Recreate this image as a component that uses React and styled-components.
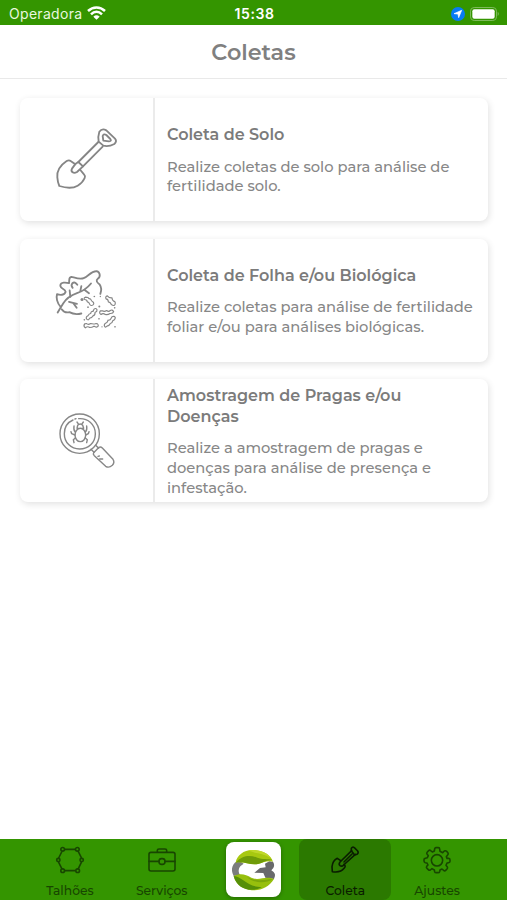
import React from 'react';
import styled, { createGlobalStyle } from 'styled-components';

const GlobalStyle = createGlobalStyle`
  * {
    box-sizing: border-box;
  }
  body {
    margin: 0;
    background-color: #fff;
    font-family: Montserrat, Inter, sans-serif;
  }
  h1, h2, p {
    margin: 0;
  }
  svg {
    display: block;
  }
`;

const Screen = styled.div`
  height: 900px;
  display: flex;
  flex-direction: column;
  overflow: hidden;
  background-color: #fff;
`;

const StatusBar = styled.div`
  height: 25px;
  flex: none;
  display: grid;
  grid-template-columns: 1fr auto 1fr;
  align-items: center;
  padding: 2px 7px 0 9px;
  background-color: #349500;
  color: #e9f7df;
  font-family: Inter, sans-serif;
  font-size: 14px;
  line-height: 20px;
`;

const Carrier = styled.div`
  display: flex;
  align-items: center;
  gap: 5px;
  letter-spacing: 0.3px;
`;

const Clock = styled.div`
  font-weight: 600;
  letter-spacing: 0.6px;
  color: #fff;
`;

const Indicators = styled.div`
  display: flex;
  justify-content: flex-end;
  align-items: center;
  gap: 5px;
`;

const Header = styled.header`
  height: 54px;
  flex: none;
  display: flex;
  align-items: center;
  justify-content: center;
  border-bottom: 1px solid #e9e9e9;

  h1 {
    color: #808080;
    font-size: 22.3px;
    font-weight: 600;
    line-height: 28px;
  }
`;

const CardList = styled.main`
  flex: 1;
  display: flex;
  flex-direction: column;
  gap: 17.7px;
  padding: 19px 19px 0 20px;
`;

const Card = styled.section`
  height: 123px;
  display: flex;
  border-radius: 8px;
  background-color: #fff;
  box-shadow: 1px 2px 7px rgba(0, 0, 0, 0.12);
`;

const CardIcon = styled.div`
  width: 135px;
  flex: none;
  display: flex;
  align-items: center;
  justify-content: center;
  padding-top: 1px;
  border-right: 2px solid #ebebeb;
`;

const CardBody = styled.div`
  flex: 1;
  display: flex;
  flex-direction: column;
  justify-content: center;
  gap: 12px;
  padding: 3px 0 0 12px;
  white-space: nowrap;
`;

const CardTitle = styled.h2`
  color: #7b7b7b;
  font-size: 16px;
  font-weight: 600;
  line-height: 20.5px;
`;

const CardText = styled.p`
  color: #878787;
  font-size: 14.7px;
  font-weight: 500;
  line-height: 19.6px;

  span {
    display: block;
  }
`;

const TabBar = styled.nav`
  height: 61.5px;
  flex: none;
  display: grid;
  grid-template-columns: repeat(5, 1fr);
  padding: 0 24px;
  background-color: #349500;
`;

const Tab = styled.div`
  display: flex;
  flex-direction: column;
  align-items: center;
  gap: 8px;
  padding-top: 6px;
  border-radius: 8px;
  background-color: ${({ $active }) => ($active ? '#2b7900' : 'transparent')};
  color: ${({ $active }) => ($active ? '#0a1d00' : '#184600')};
  font-size: 12.3px;
  font-weight: 500;
  line-height: 16px;
`;

const LogoTab = styled.div`
  display: flex;
  justify-content: center;
  padding-top: 3px;
`;

const LogoBox = styled.div`
  width: 55px;
  height: 55px;
  border-radius: 8px;
  background-color: #fff;
  box-shadow: 0 1px 4px rgba(0, 0, 0, 0.3);
`;

const LineIcon = styled.svg`
  fill: none;
  stroke: ${({ $color }) => $color || 'currentColor'};
  stroke-width: ${({ $stroke }) => $stroke || 5.5};
  stroke-linecap: ${({ $cap }) => $cap || 'round'};
  stroke-linejoin: round;
`;

const WifiIcon = () => (
  <LineIcon width="19" height="15" viewBox="0 0 57 45" $color="#fff" $stroke={7.5} $cap="butt">
    <path d="M3 15 C18 1 39 1 54 15" />
    <path d="M12 25 C22 15 35 15 45 25" />
    <path d="M19 32 Q28.500 24 38 32 L28.500 41 Z" fill="#fff" stroke="none" />
  </LineIcon>
);

const LocationIcon = () => (
  <svg width="14" height="14" viewBox="0 0 42 42">
    <circle cx="21" cy="21" r="21" fill="#087cf5" />
    <path d="M32 10 L23 32 L21 21 L9 20 Z" fill="#fff" stroke="#fff" strokeWidth="2" strokeLinejoin="round" />
  </svg>
);

const BatteryIcon = () => (
  <svg width="30" height="14" viewBox="0 0 90 42">
    <rect x="1.500" y="1.500" width="78" height="39" rx="11" fill="none" stroke="#7dba5a" strokeWidth="3" />
    <rect x="7" y="7" width="67" height="28" rx="6" fill="#fff" />
    <path d="M83 14 Q90 20 83 27 Z" fill="#7dba5a" />
  </svg>
);

const ShovelIcon = () => (
  <LineIcon width="90" height="85" viewBox="6 6 270 255" $color="#858585">
    <path d="M106 145 L92 135 Q87 131 80 135 C62 147 50 164 52 184 Q53 199 58 210 C77 216 98 218 113 209 Q128 200 134 186 Q137 180 132 175 L121 162" />
    <path d="M107 143 L96 158 Q92 165 98 169 Q103 173 111 168 L129 151 L115 138 Z" />
    <path d="M115 138 L175 78 M129 151 L188 92" />
    <path d="M176 77 Q173 62 178 47 Q186 36 199 43 L225 68 Q232 76 223 84 Q206 93 190 89 Z" />
    <path d="M190 74 L188 60 Q191 52 199 57 L211 69 Q216 75 207 76 Z" />
  </LineIcon>
);

const microbes = [
  'M136 125 Q130 127 134 132 Q141 132 142 139 Q147 139 149 146 Q153 153 159 148 Q164 143 158 139 Q154 137 152 131 Q145 130 144 126 Z',
  'M202 121 Q195 123 198 130 Q205 131 205 139 Q212 140 214 147 Q222 153 225 147 Q228 139 221 137 Q216 134 216 127 Q208 128 202 121 Z',
  'M162 161 Q168 156 171 163 Q172 168 165 171 Q166 179 159 181 Q156 188 149 188 Q146 196 140 191 Q136 185 144 181 Q147 174 152 174 Q154 166 159 168 Z',
  'M181 166 Q176 173 183 177 Q189 172 196 177 Q203 179 210 174 Q219 175 221 168 Q216 161 211 165 Q206 170 200 165 Q193 170 187 166 Z',
  'M134 205 Q129 212 136 217 Q143 211 149 216 Q156 216 162 212 Q170 218 175 211 Q174 202 165 205 Q158 206 152 204 Q144 209 140 204 Z',
  'M216 184 Q223 180 226 187 Q225 194 218 196 Q217 203 211 204 Q208 211 201 212 Q196 218 193 211 Q192 205 199 202 Q203 200 204 194 Q211 195 213 189 Z',
];

const LeafIcon = () => (
  <LineIcon width="90" height="85" viewBox="6 7.500 270 255" $color="#858585">
    <path d="M53 171 Q61 157 70 143 Q83 123 111 113 Q137 104 153 84" />
    <path d="M62 154 C51 143 48 126 51 116 C60 119 74 120 77 109 C75 98 60 101 61 89 C63 80 76 80 87 83 C89 72 85 66 94 64 C106 67 120 73 131 68 C146 62 151 48 170 47 C181 50 182 64 174 69 C166 75 171 81 179 87 Q187 99 181 115" />
    <path d="M65 161 Q73 173 88 170 Q104 179 124 174" />
    <path d="M91 124 L89 105 M121 107 L124 92 M133 103 L147 113 M87 139 L111 145 M100 143 L110 157" />
    <path d="M112 88 Q105 77 97 83 Q92 90 98 97" />
    <LineIcon as="g" $color="#858585" $stroke={3.4}>
      {microbes.map((d) => (
        <path d={d} key={d} />
      ))}
    </LineIcon>
    <g fill="#858585" stroke="none">
      <circle cx="126" cy="132" r="4.500" />
      <circle cx="163" cy="123" r="2.500" />
      <circle cx="181" cy="123" r="2" />
      <circle cx="144" cy="155" r="2.500" />
      <circle cx="178" cy="153" r="3" />
      <circle cx="224" cy="157" r="2.500" />
      <circle cx="133" cy="193" r="2.500" />
      <circle cx="177" cy="190" r="2.500" />
      <circle cx="225" cy="214" r="2.500" />
      <circle cx="186" cy="214" r="2" />
    </g>
  </LineIcon>
);

const MagnifierIcon = () => (
  <LineIcon width="90" height="85" viewBox="6 9 270 255" $color="#878787" $stroke={4.2}>
    <circle cx="119" cy="113" r="59" />
    <path d="M116 68 C144 66 166 85 166 113 C166 140 145 159 119 159 C92 159 73 139 73 113 C73 95 83 79 99 72 M105 69 L108 68" />
    <ellipse cx="121" cy="117" rx="16" ry="20" />
    <path d="M111 97 L113 88 Q121 80 128 88 L131 97 Z M116 85 L111 78 M125 85 L130 78" />
    <path d="M106 108 Q100 103 102 90 M105 117 L95 113 L93 107 M106 126 L100 131 L102 140 M136 108 Q142 103 140 90 M137 117 L145 113 L147 107 M136 126 L142 131 L140 140" />
    <path d="M153 160 L162 169 M167 148 L176 157" />
    <path d="M161 170 L177 154 Q182 151 187 156 L219 190 Q225 199 217 208 Q207 217 197 211 L163 179 Q158 174 161 170 Z" />
    <path d="M174 181 L178 180 M179 189 L188 189" />
  </LineIcon>
);

const FieldIcon = () => (
  <LineIcon width="30" height="30" viewBox="0 0 90 90" $stroke={4.8}>
    <path d="M30 13 H60 M70 20 L79 38 M79 52 L70 71 M60 77 H30 M20 70 L11 52 M11 39 L20 21" />
    <circle cx="23" cy="13" r="5.500" />
    <circle cx="67" cy="13" r="5.500" />
    <circle cx="80" cy="45" r="5" />
    <circle cx="68" cy="77" r="5.500" />
    <circle cx="23" cy="77" r="5.500" />
    <circle cx="10" cy="45" r="5" />
  </LineIcon>
);

const BriefcaseIcon = () => (
  <LineIcon width="30" height="30" viewBox="0 0 90 90" $stroke={4.8}>
    <rect x="6" y="22" width="78" height="56" rx="6" />
    <path d="M31 21 V16 Q31 12 36 12 H54 Q59 12 59 16 V21 M6 49 H36 M54 49 H84" />
    <rect x="36" y="41" width="18" height="17" rx="8" />
  </LineIcon>
);

const ShovelTabIcon = () => (
  <LineIcon width="30" height="30" viewBox="0 0 90 90" $stroke={4.8}>
    <path d="M32 47 L22 40 Q8 47 6 65 L7 80 Q32 84 42 70 Q49 64 42 58" />
    <path d="M65 17 L30 51 Q25 58 30 62 Q36 66 41 60 L76 28" />
    <path d="M64 17 L64 10 Q67 4 73 8 L83 18 Q87 24 81 28 L74 30 Z M42 51 L66 27" />
  </LineIcon>
);

// Eight rounded teeth around the hub
const GearIcon = () => (
  <LineIcon width="30" height="30" viewBox="0 0 90 90" $stroke={4.8}>
    <path d="M38 12 Q38 8 42 8 H49 Q53 8 53 12 L54 19 L62 23 L67 18 Q71 16 74 19 L78 24 Q80 27 77 30 L73 35 L75 40 L80 40 Q84 41 84 45 V49 Q84 53 80 53 L75 54 L72 61 L76 66 Q78 69 75 72 L71 76 Q68 79 65 76 L60 72 L54 75 L53 80 Q52 83 48 83 H43 Q39 83 38 80 L37 75 L30 71 L25 75 Q22 77 19 74 L15 70 Q12 67 14 64 L18 60 L15 54 L10 53 Q6 52 6 48 V44 Q6 40 10 40 L16 38 L19 32 L15 27 Q13 24 16 21 L20 17 Q23 14 26 17 L31 21 L37 18 Z" />
    <circle cx="45" cy="46" r="17" />
  </LineIcon>
);

const Logo = () => (
  <svg width="55" height="55" viewBox="48 33 165 165">
    <path d="M86 88 C68 96 60 114 71 135 L91 133 C84 125 85 113 91 106 L101 98 Z" fill="#7b7c7d" />
    <path d="M133 125 L150 111 L167 109 L165 98 L178 91 L189 92 Q198 106 184 118 Q201 127 192 144 L166 140 L160 126 Z" fill="#68696b" />
    <path d="M77 95 C80 70 109 52 137 58 C163 60 182 73 189 92 C172 88 157 96 144 99 C119 103 101 90 77 95 Z" fill="#a7c810" />
    <path d="M77 95 C98 71 122 72 142 80 C156 86 174 82 187 87 C171 85 159 95 144 99 C119 103 101 90 77 95 Z" fill="#6f9b08" />
    <path d="M115 58 C138 70 157 64 184 82 C174 64 141 53 115 58 Z" fill="#bfd72a" />
    <path d="M71 135 C91 126 107 130 124 140 C147 151 166 133 192 144 C176 170 147 183 117 176 C94 172 76 157 71 135 Z" fill="#97bf0d" />
    <path d="M71 135 C97 137 111 168 155 168 C132 184 82 180 71 135 Z" fill="#568f08" />
    <path d="M110 137 C139 154 162 145 189 145 C166 158 133 158 110 137 Z" fill="#7ca70a" />
  </svg>
);

const cards = [
  {
    title: ['Coleta de Solo'],
    text: ['Realize coletas de solo para análise de', 'fertilidade solo.'],
    Icon: ShovelIcon,
  },
  {
    title: ['Coleta de Folha e/ou Biológica'],
    text: ['Realize coletas para análise de fertilidade', 'foliar e/ou para análises biológicas.'],
    Icon: LeafIcon,
  },
  {
    title: ['Amostragem de Pragas e/ou', 'Doenças'],
    text: ['Realize a amostragem de pragas e', 'doenças para análise de presença e', 'infestação.'],
    Icon: MagnifierIcon,
  },
];

export default function App() {
  return (
    <Screen>
      <GlobalStyle />
      <StatusBar>
        <Carrier>
          Operadora
          <WifiIcon />
        </Carrier>
        <Clock>15:38</Clock>
        <Indicators>
          <LocationIcon />
          <BatteryIcon />
        </Indicators>
      </StatusBar>
      <Header>
        <h1>Coletas</h1>
      </Header>
      <CardList>
        {cards.map(({ title, text, Icon }) => (
          <Card key={title[0]}>
            <CardIcon>
              <Icon />
            </CardIcon>
            <CardBody>
              <CardTitle>
                {title.map((line) => (
                  <div key={line}>{line}</div>
                ))}
              </CardTitle>
              <CardText>
                {text.map((line) => (
                  <span key={line}>{line}</span>
                ))}
              </CardText>
            </CardBody>
          </Card>
        ))}
      </CardList>
      <TabBar>
        <Tab>
          <FieldIcon />
          Talhões
        </Tab>
        <Tab>
          <BriefcaseIcon />
          Serviços
        </Tab>
        <LogoTab>
          <LogoBox>
            <Logo />
          </LogoBox>
        </LogoTab>
        <Tab $active>
          <ShovelTabIcon />
          Coleta
        </Tab>
        <Tab>
          <GearIcon />
          Ajustes
        </Tab>
      </TabBar>
    </Screen>
  );
}
